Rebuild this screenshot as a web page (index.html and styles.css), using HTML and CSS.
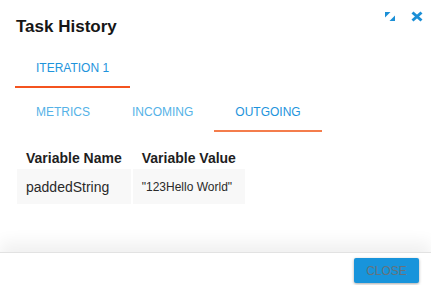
FILE: index.html
```html
<!DOCTYPE html>
<html lang="en">
<head>
    <meta charset="UTF-8">
    <meta name="viewport" content="width=device-width, initial-scale=1.0">
    <title>Task History</title>
    <link rel="stylesheet" href="styles.css">
</head>
<body>
    <div class="dialog">
        <div class="dialog-header">
            <h1>Task History</h1>
            <div class="header-actions">
                <svg class="icon-expand" viewBox="0 0 10 9">
                    <path d="M0 0H5.5L0 5.5Z"></path>
                    <path d="M10 9H4.5L10 3.5Z"></path>
                </svg>
                <svg class="icon-close" viewBox="0 0 12 11">
                    <path d="M1.5 1.5L10.5 9.5M10.5 1.5L1.5 9.5"></path>
                </svg>
            </div>
        </div>

        <div class="dialog-body">
            <div class="tabs">
                <div class="tab active">ITERATION 1</div>
            </div>

            <div class="tabs sub-tabs">
                <div class="tab">METRICS</div>
                <div class="tab">INCOMING</div>
                <div class="tab active">OUTGOING</div>
            </div>

            <table class="vars">
                <thead>
                    <tr>
                        <th>Variable Name</th>
                        <th>Variable Value</th>
                    </tr>
                </thead>
                <tbody>
                    <tr>
                        <td class="var-name">paddedString</td>
                        <td class="var-value">"123Hello World"</td>
                    </tr>
                </tbody>
            </table>
        </div>

        <div class="dialog-footer">
            <button class="button close-button">CLOSE</button>
        </div>
    </div>
</body>
</html>
```

FILE: styles.css
```css
* {
    box-sizing: border-box;
    margin: 0;
    padding: 0;
}

body {
    font-family: "Liberation Sans", Arial, sans-serif;
    background: white;
    height: 100vh;
}

.dialog {
    height: 100%;
    display: flex;
    flex-direction: column;
}

.dialog-header {
    display: flex;
    justify-content: space-between;
    align-items: flex-start;
    padding: 11px 8px 0 16px;
}

h1 {
    font-size: 17px;
    line-height: 20px;
    font-weight: 700;
    color: #161616;
    margin-top: 6px;
}

.header-actions {
    display: flex;
    align-items: flex-start;
    gap: 16px;
}

.icon-expand {
    width: 10px;
    height: 9px;
    margin-top: 1px;
    fill: #1b8fd6;
}

.icon-close {
    width: 12px;
    height: 11px;
    stroke: #1b8fd6;
    stroke-width: 3;
    fill: none;
}

.dialog-body {
    flex: 1;
    padding: 12px 15px 0;
}

.tabs {
    display: flex;
}

.sub-tabs {
    margin-top: 5px;
}

.tab {
    padding: 12px 21px 11px;
    font-size: 12px;
    line-height: 14px;
    color: #55b2e7;
    border-bottom: 2px solid transparent;
}

.tab.active {
    color: #1e94dc;
    border-bottom-color: #f4531f;
}

.sub-tabs .tab.active {
    border-bottom-color: #f47d4c;
}

.vars {
    margin-top: 15px;
    border-collapse: separate;
    border-spacing: 2px;
}

.vars th {
    font-size: 14px;
    line-height: 18px;
    font-weight: 700;
    color: #1e1e1e;
    text-align: left;
    padding: 0 9px;
}

.vars td {
    background: #f8f8f8;
    height: 35px;
    padding: 0 9px;
    color: #2a2a2a;
}

.var-name {
    font-size: 14px;
}

.var-value {
    font-size: 12px;
}

.dialog-footer {
    display: flex;
    justify-content: flex-end;
    height: 33px;
    padding: 5px 12px 0;
    border-top: 1px solid #e2e2e2;
    box-shadow: 0 -10px 16px rgba(0,0,0,0.06);
}

.button {
    width: 65px;
    height: 25px;
    border: none;
    border-radius: 2px;
    font-family: inherit;
    font-size: 12px;
    cursor: pointer;
}

.close-button {
    background-color: #1894db;
    color: #66737b;
    box-shadow: 0 1px 3px rgba(0,0,0,0.35);
}
```
